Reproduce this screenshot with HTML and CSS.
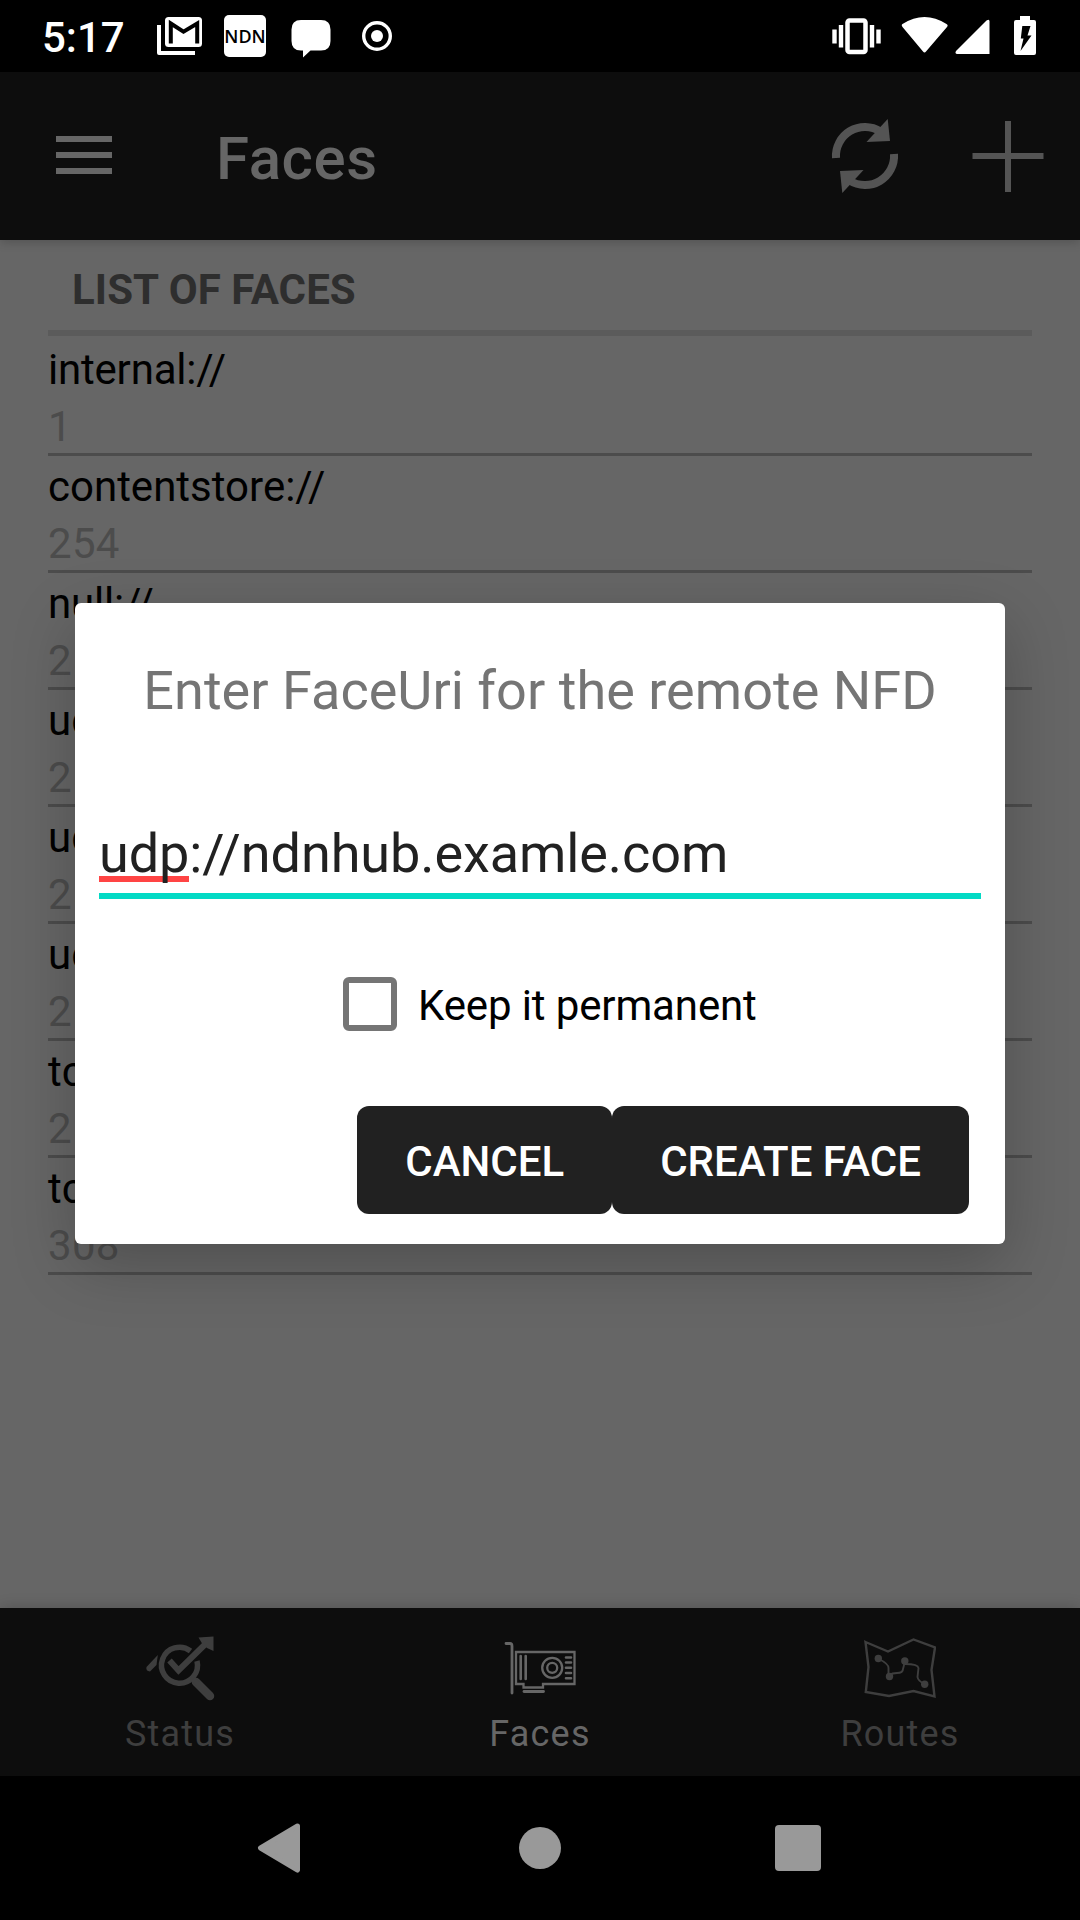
FILE: index.html
```html
<!DOCTYPE html>
<html lang="en">
<head>
<meta charset="utf-8">
<title>Faces</title>
<link rel="stylesheet" href="styles.css">
</head>
<body>
<div class="screen">
  <header class="status-bar">
    <span class="clock">5:17</span>
    <svg class="ic-mail" width="46" height="40" viewBox="156 16 46 40">
      <path d="M158 25V53H194" fill="none" stroke="#fff" stroke-width="4" stroke-linejoin="round"/>
      <rect x="164" y="17" width="37" height="30" rx="3.5" fill="#fff"/>
      <path d="M169.8 43.5V23.5L182.5 31.700L196.200 23.500V43.500" fill="none" stroke="#000" stroke-width="4"/>
    </svg>
    <span class="ic-ndn">NDN</span>
    <svg class="ic-chat" width="40" height="40" viewBox="291 19 40 40">
      <path d="M301 20H321Q330.500 20 330.500 29.500V41Q330.500 50.500 321 50.500H310.500L303 57.500V50.500H301Q291.500 50.500 291.500 41V29.500Q291.500 20 301 20Z" fill="#fff"/>
    </svg>
    <svg class="ic-record" width="32" height="32" viewBox="361 20 32 32">
      <circle cx="377" cy="36" r="13.300" fill="none" stroke="#fff" stroke-width="3.400"/>
      <circle cx="377" cy="36" r="6" fill="#fff"/>
    </svg>
    <div class="status-right">
      <svg width="50" height="38" viewBox="831 17 50 38">
        <rect x="847.500" y="20.500" width="18" height="31.500" rx="2" fill="none" stroke="#fff" stroke-width="4.500"/>
        <path d="M834.500 29.500V43.500M841 25V47.500M872 25V47.500M878.500 29.500V43.500" stroke="#fff" stroke-width="4.400"/>
      </svg>
      <svg width="48" height="38" viewBox="901 17 48 38">
        <path d="M902.500 24Q924.500 10 946.500 24Q948.500 25 947 27L926 51.500Q924.500 53.500 923 51.500L902.500 27Q901 25 902.500 24Z" fill="#fff"/>
      </svg>
      <svg width="35" height="36" viewBox="955.500 19 35 36">
        <path d="M987 20.500Q990 18.500 990 21.500V54H958Q955 54 956.500 51Z" fill="#fff"/>
      </svg>
      <svg width="22" height="40" viewBox="1014 16 22 40">
        <path d="M1020 16H1030V20H1034Q1036 20 1036 22V53Q1036 55 1034 55H1016Q1014 55 1014 53V22Q1014 20 1016 20H1020Z" fill="#fff"/>
        <path d="M1022.300 26H1030.500L1027.500 35.500H1031.500L1020.500 51L1023.500 38.500H1020.800Z" fill="#000"/>
      </svg>
    </div>
  </header>

  <div class="app-bar">
    <div class="menu"><i></i><i></i><i></i></div>
    <h1 class="app-title">Faces</h1>
    <svg class="ic-refresh" width="72" height="80" viewBox="829 116 72 80">
      <path d="M836 158A29 29 0 0 1 880.500 131.500" fill="none" stroke="#545454" stroke-width="8"/>
      <path d="M887.700 119L890 141L866.500 142Z" fill="#545454"/>
      <path d="M894 154A29 29 0 0 1 849.500 180.500" fill="none" stroke="#545454" stroke-width="8"/>
      <path d="M842.300 193L840 171L863.500 170Z" fill="#545454"/>
    </svg>
    <svg class="ic-plus" width="72" height="72" viewBox="0 0 72 72">
      <path d="M36 1V72M.500 36H71.500" stroke="#545454" stroke-width="6"/>
    </svg>
  </div>

  <main class="content">
    <h2 class="list-heading">LIST OF FACES</h2>
    <ul class="faces">
      <li><span class="uri tight">internal://</span><span class="id">1</span></li>
      <li><span class="uri">contentstore://</span><span class="id">254</span></li>
      <li><span class="uri tight">null://</span><span class="id">255</span></li>
      <li><span class="uri">udp4://</span><span class="id">256</span></li>
      <li><span class="uri">udp4://</span><span class="id">257</span></li>
      <li><span class="uri">udp6://</span><span class="id">258</span></li>
      <li><span class="uri">tcp4://</span><span class="id">259</span></li>
      <li><span class="uri">tcp4://</span><span class="id">308</span></li>
    </ul>
  </main>

  <nav class="tabs">
    <div class="tab">
      <svg width="72" height="72" viewBox="144 1632 72 72">
        <g fill="none" stroke="#3e3e3e">
          <path d="M190.500 1651A18 18 0 1 0 197 1661" stroke-width="5.500"/>
          <path d="M169.500 1660.500L178.500 1670.500L208 1641.500" stroke-width="6"/>
          <path d="M196 1682L210 1696" stroke-width="8.500" stroke-linecap="round"/>
          <path d="M193 1679L198 1684" stroke-width="5"/>
        </g>
        <path d="M198.500 1637.500L213.500 1636.500V1651L207 1648L201.500 1642.500Z" fill="#3e3e3e"/>
        <path d="M157.800 1655L146.500 1667Q145.500 1671 150 1671.500L156.500 1665Z" fill="#3e3e3e"/>
      </svg>
      <span>Status</span>
    </div>
    <div class="tab active">
      <svg width="72" height="72" viewBox="504 1632 72 72">
        <g fill="none" stroke="#666" stroke-width="2.300">
          <path d="M506 1643.500H510Q512 1643.500 512 1646V1693" stroke-width="2.800" stroke-linecap="round"/>
          <path d="M516 1652H574.500V1684H543V1687.500H523.500V1684H516Z"/>
          <path d="M520.700 1656V1679M525.700 1656V1679" stroke-width="2.600" stroke-linecap="round"/>
          <circle cx="552.200" cy="1667.800" r="10"/>
          <circle cx="552.200" cy="1667.800" r="5"/>
          <path d="M566 1657.500H571M566 1662.500H571M566 1667.800H571M566 1673H571M566 1678.200H571" stroke-width="2.600" stroke-linecap="round"/>
          <path d="M524 1691.500H543.500" stroke-width="2.800" stroke-linecap="round"/>
        </g>
      </svg>
      <span>Faces</span>
    </div>
    <div class="tab">
      <svg width="72" height="72" viewBox="864 1632 72 72">
        <g fill="none" stroke="#3e3e3e" stroke-width="2.400">
          <path d="M865.500 1642L888 1651.500L913.500 1639.500L935 1647.500L931.500 1670L934.500 1696.300L913.500 1691L889 1696L865.800 1692L868.500 1667Z"/>
          <path d="M878 1658.500Q889 1664 888.500 1668V1676M890 1675Q892 1673 897 1673Q903 1673 903 1669L905 1661M905 1664Q918 1664 918.500 1668L917.500 1677Q918 1681 924.500 1684" stroke-width="1.900"/>
        </g>
        <g fill="#3e3e3e"><circle cx="878.300" cy="1658.500" r="3.700"/><circle cx="889.500" cy="1676.500" r="3.700"/><circle cx="904.800" cy="1661" r="3.700"/><circle cx="924.700" cy="1684.300" r="3.700"/></g>
      </svg>
      <span>Routes</span>
    </div>
  </nav>

  <footer class="system-nav">
    <svg width="44" height="50" viewBox="0 0 44 50"><path d="M40.500 3L3.500 25L40.500 47Z" fill="#999" stroke="#999" stroke-width="5" stroke-linejoin="round"/></svg>
    <i class="home"></i>
    <i class="recents"></i>
  </footer>

  <section class="dialog">
    <h2 class="dialog-title">Enter FaceUri for the remote NFD</h2>
    <div class="field"><span class="misspelled">udp</span>://ndnhub.examle.com</div>
    <div class="check-row"><i class="checkbox"></i><span>Keep it permanent</span></div>
    <div class="actions"><button>CANCEL</button><button>CREATE FACE</button></div>
  </section>
</div>
</body>
</html>
```
FILE: styles.css
```css
* { box-sizing: border-box; margin: 0; padding: 0; }
body { background: #000; }
.screen {
  position: relative;
  width: 1080px; height: 1920px;
  display: flex; flex-direction: column;
  overflow: hidden;
  font-family: Roboto, "Noto Sans", sans-serif;
  font-size: 42px;
  background: #666;
}
svg { display: block; flex: none; }

.status-bar {
  height: 72px; background: #000; color: #fff;
  display: flex; align-items: center; padding: 0 44px 0 42px;
}
.clock { width: 115px; font-weight: 500; line-height: 72px; padding-top: 3px; }
.ic-ndn {
  width: 42px; height: 42px; margin-left: 21px;
  border-radius: 5px; background: #fff; color: #000;
  font: 600 18px/42px "Open Sans", sans-serif; text-align: center;
}
.ic-chat { margin: 5px 0 0 25px; }
.ic-record { margin-left: 30px; }
.status-right { margin-left: auto; display: flex; align-items: center; }
.status-right svg:nth-child(2) { margin-left: 20px; }
.status-right svg:nth-child(3) { margin: 2px 0 0 6px; }
.status-right svg:nth-child(4) { margin-left: 24px; }

.app-bar {
  z-index: 1;
  height: 168px; background: #0d0d0d; color: #666;
  display: flex; align-items: center; padding: 0 36px 0 56px;
  box-shadow: 0 2px 10px rgba(0, 0, 0, .2);
}
.menu { display: flex; flex-direction: column; gap: 10px; width: 56px; margin-bottom: 2px; }
.menu i { height: 6px; background: #666; }
.app-title {
  margin-left: 104px; padding-top: 6px;
  font-size: 60px; font-weight: 500; line-height: 72px; letter-spacing: .6px;
}
.ic-refresh { margin-left: auto; }
.ic-plus { margin-left: 71px; }

.content { flex: 1; padding: 0 48px; }
.list-heading {
  height: 96px; padding: 25px 24px 0;
  border-bottom: 6px solid #5b5b5b;
  color: #2e2e2e; font-size: 42px; font-weight: 700; line-height: 50px; letter-spacing: .08px;
}
.faces { list-style: none; padding-top: 3px; }
.faces li {
  height: 117px; padding-top: 3px; border-bottom: 3px solid #4c4c4c;
  display: flex; flex-direction: column; gap: 2px; line-height: 55px;
}
.uri { color: #000; }
.uri.tight { letter-spacing: -.2px; }
.id { color: #4c4c4c; letter-spacing: .3px; }

.tabs {
  height: 168px; background: #0d0d0d;
  display: flex; box-shadow: 0 0 14px rgba(0, 0, 0, .2);
}
.tab {
  flex: 1; padding-top: 24px;
  display: flex; flex-direction: column; align-items: center;
  color: #3e3e3e; font-size: 36px; line-height: 42px; letter-spacing: 1.2px;
}
.tab span { margin-top: 9px; }
.tab.active { color: #666; }

.system-nav {
  height: 144px; background: #000;
  display: flex; align-items: center; padding-left: 257px;
}
.home { width: 42px; height: 42px; margin-left: 218px; border-radius: 50%; background: #999; }
.recents { width: 46px; height: 46px; margin-left: 214px; border-radius: 4px; background: #999; }

.dialog {
  position: absolute; z-index: 2; left: 75px; top: 603px;
  width: 930px; height: 641px; padding: 55px 24px 30px;
  display: flex; flex-direction: column;
  background: #fff; border-radius: 6px;
  box-shadow: 0 20px 64px rgba(0, 0, 0, .23);
}
.dialog-title {
  color: #757575; font-size: 54px; font-weight: 400; line-height: 66px;
  text-align: center; letter-spacing: .03px;
}
.field {
  margin-top: 95px; height: 80px; padding-top: 1px; border-bottom: 6px solid #03dac5;
  color: #212121; font-size: 54px; line-height: 68px; letter-spacing: -.08px;
}
.misspelled {
  display: inline-block; height: 62px;
  background: linear-gradient(#ff4444, #ff4444) 0 56px / 90px 6px no-repeat;
}
.check-row { margin: 75px 0 0 244px; display: flex; align-items: center; height: 60px; color: #000; }
.checkbox { width: 54px; height: 54px; border: 6px solid #757575; border-radius: 6px; }
.check-row span { margin-left: 21px; padding-top: 2px; letter-spacing: -.13px; }
.actions { margin: auto 12px 0 0; display: flex; justify-content: flex-end; }
.actions button {
  height: 108px; padding: 4px 48px 0; border: 0; border-radius: 12px;
  background: #212121; color: #fff; font: 500 42px/50px Roboto, sans-serif;
}
```
